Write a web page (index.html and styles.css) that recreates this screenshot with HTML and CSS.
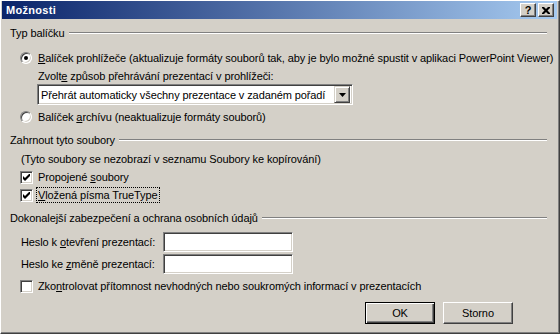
FILE: index.html
```html
<!DOCTYPE html>
<html lang="cs">

<head>
  <meta charset="UTF-8">
  <title>Možnosti</title>
  <link rel="stylesheet" href="styles.css">
</head>

<body>
  <div class="window">
    <div class="titlebar">
      <span class="title">Možnosti</span>
      <div class="caption-btns">
        <span class="cbtn help">?</span>
        <span class="cbtn">
          <svg width="8" height="7" viewBox="0 0 8 7"><path d="M0 0h2l2 2 2-2h2v1l-2.5 2.5L8 6v1H6L4 5 2 7H0V6l2.5-2.5L0 1z" fill="#000"/></svg>
        </span>
      </div>
    </div>

    <div class="content">
      <div class="group-head g1"><span>Typ balíčku</span><i class="rule"></i></div>
      <div class="opt r1">
        <span class="radio"><i class="dot"></i></span>
        <span><u>B</u>alíček prohlížeče (aktualizuje formáty souborů tak, aby je bylo možné spustit v aplikaci PowerPoint Viewer)</span>
      </div>
      <div class="sub zvolte">Zvolt<u>e</u> způsob přehrávání prezentací v prohlížeči:</div>
      <div class="select">
        <span class="select-text">Přehrát automaticky všechny prezentace v zadaném pořadí</span>
        <span class="arrow-btn">
          <svg width="7" height="4" viewBox="0 0 7 4"><path d="M0 0h7L3.5 4z" fill="#000"/></svg>
        </span>
      </div>
      <div class="opt r2">
        <span class="radio"></span>
        <span>Balíček <u>a</u>rchívu (neaktualizuje formáty souborů)</span>
      </div>

      <div class="group-head g2"><span>Zahrnout tyto soubory</span><i class="rule"></i></div>
      <div class="note">(Tyto soubory se nezobrazí v seznamu Soubory ke kopírování)</div>
      <div class="opt c1">
        <span class="check on"><svg width="7" height="7" viewBox="0 0 7 7"><path d="M0 2v3l2 2 5-5V-1L2 4z" fill="#000"/></svg></span>
        <span>Propojené <u>s</u>oubory</span>
      </div>
      <div class="opt c2">
        <span class="check on"><svg width="7" height="7" viewBox="0 0 7 7"><path d="M0 2v3l2 2 5-5V-1L2 4z" fill="#000"/></svg></span>
        <span class="focus"><u>V</u>ložená písma TrueType</span>
      </div>

      <div class="group-head g3"><span>Dokonalejší zabezpečení a ochrana osobních údajů</span><i class="rule"></i></div>
      <div class="field f1">
        <span class="label">Heslo k <u>o</u>tevření prezentací:</span>
        <span class="input"></span>
      </div>
      <div class="field f2">
        <span class="label">Heslo ke <u>z</u>měně prezentací:</span>
        <span class="input"></span>
      </div>
      <div class="opt c3">
        <span class="check"></span>
        <span>Zko<u>n</u>trolovat přítomnost nevhodných nebo soukromých informací v prezentacích</span>
      </div>

      <div class="buttons">
        <div class="btn default"><span>OK</span></div>
        <div class="btn"><span>Storno</span></div>
      </div>
    </div>
  </div>
</body>

</html>
```

FILE: styles.css
```css
body {
  margin: 0;
  background-color: #d4d0c8;
  font-family: 'Liberation Sans', Arial, sans-serif;
  font-size: 11px;
  letter-spacing: -0.1px;
  color: #000000;
  white-space: nowrap;
}

.window {
  width: 560px;
  height: 334px;
  box-sizing: border-box;
  background-color: #d4d0c8;
  border-top: 1px solid #ffffff;
  border-left: 1px solid #ffffff;
  border-right: 1px solid #404040;
  border-bottom: 1px solid #404040;
  box-shadow: inset -1px -1px 0 #808080;
  padding: 0 2px 0 1px;
  display: flex;
  flex-direction: column;
}

.titlebar {
  height: 18px;
  background: linear-gradient(to right, #0a246a, #a6caf0);
  display: flex;
  align-items: center;
  justify-content: space-between;
  padding: 0 3px 0 4px;
}

.title {
  color: #ffffff;
  font-weight: bold;
  font-size: 11px;
  letter-spacing: 0.3px;
}

.caption-btns {
  display: flex;
  gap: 2px;
}

.cbtn {
  width: 16px;
  height: 14px;
  box-sizing: border-box;
  background-color: #d4d0c8;
  border-top: 1px solid #ffffff;
  border-left: 1px solid #ffffff;
  border-right: 1px solid #404040;
  border-bottom: 1px solid #404040;
  box-shadow: inset -1px -1px 0 #808080;
  display: flex;
  align-items: center;
  justify-content: center;
}

.cbtn.help {
  font-weight: bold;
  font-size: 11px;
  line-height: 12px;
}

.content {
  position: relative;
  padding: 0 0 0 8px;
  display: flex;
  flex-direction: column;
}

.group-head {
  display: flex;
  align-items: center;
  height: 14px;
  line-height: 14px;
  margin-right: 10px;
}

.rule {
  flex: 1;
  height: 0;
  border-top: 1px solid #808080;
  border-bottom: 1px solid #ffffff;
  margin-left: 4px;
}

.g1 { margin-top: 7px; }
.g2 { margin-top: 9px; }
.g3 { margin-top: 9px; }

.opt {
  display: flex;
  align-items: center;
  height: 14px;
  line-height: 14px;
  margin-left: 10px;
  gap: 4px;
}

.r1 { margin-top: 11px; }
.r2 { margin-top: 5px; }
.c1 { margin-top: 4px; }
.c2 { margin-top: 4px; }
.c3 { margin-top: 5px; }

.radio {
  width: 12px;
  height: 12px;
  box-sizing: border-box;
  border-radius: 50%;
  background-color: #ffffff;
  border: 1px solid;
  border-color: #808080 #ffffff #ffffff #808080;
  box-shadow: inset 1px 1px 0 #404040, inset -1px -1px 0 #d4d0c8;
  display: flex;
  align-items: center;
  justify-content: center;
  margin-right: 2px;
}

.dot {
  width: 4px;
  height: 4px;
  border-radius: 50%;
  background-color: #000000;
}

.check {
  width: 13px;
  height: 13px;
  box-sizing: border-box;
  background-color: #ffffff;
  border: 1px solid;
  border-color: #808080 #ffffff #ffffff #808080;
  box-shadow: inset 1px 1px 0 #404040, inset -1px -1px 0 #d4d0c8;
  display: flex;
  align-items: center;
  justify-content: center;
  margin-right: 1px;
}

.focus {
  outline: 1px dotted #000000;
  outline-offset: 0;
  padding: 0 1px;
  margin-left: -1px;
}

.sub {
  height: 14px;
  line-height: 14px;
  margin-left: 28px;
}

.zvolte { margin-top: 4px; }

.select {
  width: 316px;
  height: 21px;
  box-sizing: border-box;
  margin: 1px 0 0 27px;
  background-color: #ffffff;
  border: 1px solid;
  border-color: #808080 #ffffff #ffffff #808080;
  box-shadow: inset 1px 1px 0 #404040, inset -1px -1px 0 #d4d0c8;
  display: flex;
  align-items: center;
  justify-content: space-between;
  padding: 2px 2px 2px 3px;
}

.arrow-btn {
  width: 16px;
  height: 17px;
  box-sizing: border-box;
  background-color: #d4d0c8;
  border-top: 1px solid #d4d0c8;
  border-left: 1px solid #d4d0c8;
  border-right: 1px solid #404040;
  border-bottom: 1px solid #404040;
  box-shadow: inset 1px 1px 0 #ffffff, inset -1px -1px 0 #808080;
  display: flex;
  align-items: center;
  justify-content: center;
}

.note {
  height: 14px;
  line-height: 14px;
  margin: 5px 0 0 11px;
}

.field {
  display: flex;
  align-items: center;
  margin-left: 11px;
}

.f1 { margin-top: 7px; }
.f2 { margin-top: 2px; }

.label {
  width: 142px;
}

.input {
  width: 130px;
  height: 20px;
  box-sizing: border-box;
  background-color: #ffffff;
  border: 1px solid;
  border-color: #808080 #ffffff #ffffff #808080;
  box-shadow: inset 1px 1px 0 #404040, inset -1px -1px 0 #d4d0c8;
}

.buttons {
  display: flex;
  justify-content: flex-end;
  gap: 8px;
  margin: 9px 44px 0 0;
}

.btn {
  width: 70px;
  height: 22px;
  box-sizing: border-box;
  background-color: #d4d0c8;
  border-top: 1px solid #ffffff;
  border-left: 1px solid #ffffff;
  border-right: 1px solid #404040;
  border-bottom: 1px solid #404040;
  box-shadow: inset -1px -1px 0 #808080;
  display: flex;
  align-items: center;
  justify-content: center;
}

.btn.default {
  border: 1px solid #000000;
  box-shadow: inset 1px 1px 0 #ffffff, inset -1px -1px 0 #404040, inset -2px -2px 0 #808080;
}
```
